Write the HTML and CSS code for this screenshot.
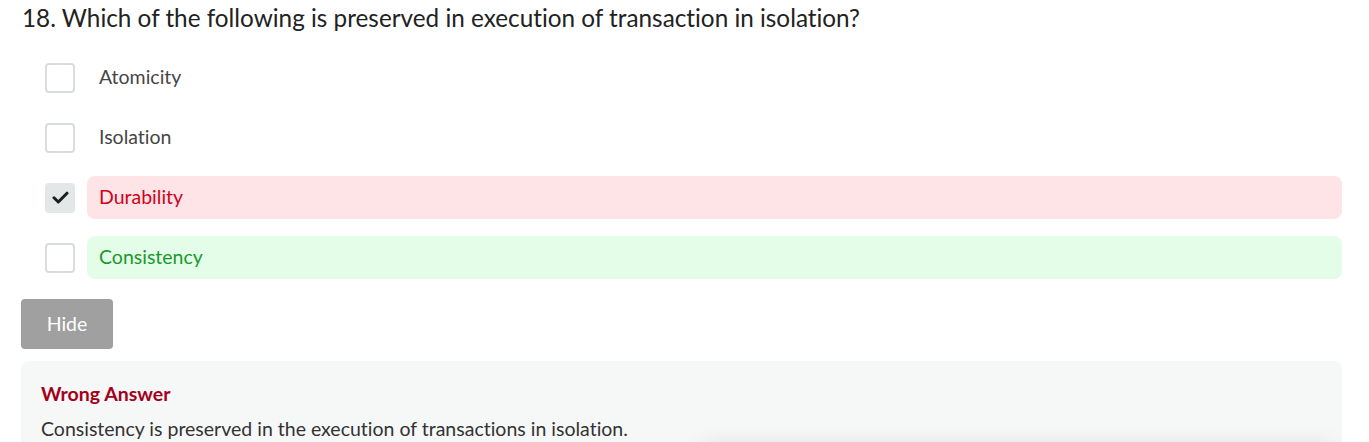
FILE: index.html
```html
<!DOCTYPE html>
<html lang="en">
<head>
<meta charset="utf-8">
<title>Question 18</title>
<link rel="stylesheet" href="styles.css">
</head>
<body>
<div class="question">
  <h2 class="q-title">18. Which of the following is preserved in execution of transaction in isolation?</h2>
  <ul class="options">
    <li class="option">
      <span class="check"></span>
      <span class="label">Atomicity</span>
    </li>
    <li class="option">
      <span class="check"></span>
      <span class="label">Isolation</span>
    </li>
    <li class="option">
      <span class="check checked">
        <svg width="17" height="13" viewBox="0 0 17 13"><path d="M2 6.8 L6.3 11 L15 2.2" fill="none" stroke="#1e1e1e" stroke-width="3" stroke-linecap="round" stroke-linejoin="round"/></svg>
      </span>
      <span class="label wrong">Durability</span>
    </li>
    <li class="option">
      <span class="check"></span>
      <span class="label right">Consistency</span>
    </li>
  </ul>
  <button class="hide-btn">Hide</button>
  <div class="feedback">
    <div class="fb-title">Wrong Answer</div>
    <p class="fb-text">Consistency is preserved in the execution of transactions in isolation.</p>
  </div>
</div>
<div class="bottom-bar"></div>
</body>
</html>
```
FILE: styles.css
```css
html, body {
  margin: 0;
  padding: 0;
  background: #fff;
  overflow: hidden;
}
body {
  font-family: Lato, "Noto Sans", sans-serif;
  font-variant-ligatures: none;
  width: 1369px;
  height: 442px;
  position: relative;
}
.question {
  padding: 0 27px 0 21px;
}
.q-title {
  margin: 0;
  padding: 4px 0 0 1px;
  font-size: 24.3px;
  font-weight: 400;
  line-height: 28px;
  color: #222;
}
.options {
  list-style: none;
  margin: 24px 0 0 0;
  padding: 0;
  display: flex;
  flex-direction: column;
  gap: 17px;
}
.option {
  display: flex;
  align-items: center;
  height: 43px;
  padding-left: 24px;
}
.check {
  box-sizing: border-box;
  width: 30px;
  height: 30px;
  border: 2px solid #d9dddd;
  border-radius: 4px;
  flex: none;
  display: flex;
  align-items: center;
  justify-content: center;
  background: #fff;
}
.check.checked {
  background: #e3e7e7;
  border-color: #e3e7e7;
}
.label {
  margin-left: 12px;
  flex: 1;
  align-self: stretch;
  display: flex;
  align-items: center;
  padding-left: 12px;
  padding-bottom: 2px;
  box-sizing: border-box;
  border-radius: 8px;
  font-size: 19.5px;
  color: #464646;
}
.label.wrong {
  background: #fee4e6;
  color: #d0021b;
}
.label.right {
  background: #e4fde9;
  color: #189a2b;
}
.hide-btn {
  margin-top: 20px;
  width: 92px;
  height: 50px;
  border: none;
  border-radius: 4px;
  background: #a0a0a0;
  color: #fff;
  font-family: Lato, "Noto Sans", sans-serif;
  font-size: 19.5px;
  display: block;
  padding: 0 0 2px 0;
}
.feedback {
  margin-top: 12px;
  background: #f6f8f8;
  border-radius: 8px;
  padding: 22px 20px 20px 20px;
}
.fb-title {
  font-weight: 700;
  font-size: 19.5px;
  line-height: 22px;
  color: #a3001a;
}
.fb-text {
  margin: 13px 0 0 0;
  font-size: 19.5px;
  line-height: 22px;
  color: #333;
}
.bottom-bar {
  position: absolute;
  left: 705px;
  width: 625px;
  top: 452px;
  height: 60px;
  background: #fff;
  box-shadow: 0 0 22px 6px rgba(0, 0, 0, 0.12);
  border-radius: 8px;
}
```
